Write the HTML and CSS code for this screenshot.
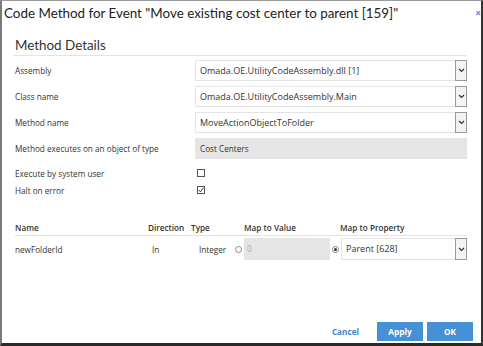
FILE: index.html
```html
<!DOCTYPE html>
<html lang="en">
<head>
  <meta charset="UTF-8">
  <title>Code Method</title>
  <link rel="stylesheet" href="styles.css">
</head>
<body>
  <div class="dialog">
    <div class="dlg-head">
      <span class="dlg-title">Code Method for Event "Move existing cost center to parent [159]"</span>
      <span class="dlg-close">&#215;</span>
    </div>

    <div class="dlg-body">
      <div class="section-title">Method Details</div>

      <div class="form">
        <label class="lbl">Assembly</label>
        <div class="select"><span class="val">Omada.OE.UtilityCodeAssembly.dll [1]</span><span class="arrow"><svg width="7" height="5" viewBox="0 0 7 5"><path d="M1 1 L3.5 3.5 L6 1" fill="none" stroke="#333" stroke-width="1.2"/></svg></span></div>

        <label class="lbl">Class name</label>
        <div class="select"><span class="val">Omada.OE.UtilityCodeAssembly.Main</span><span class="arrow"><svg width="7" height="5" viewBox="0 0 7 5"><path d="M1 1 L3.5 3.5 L6 1" fill="none" stroke="#333" stroke-width="1.2"/></svg></span></div>

        <label class="lbl">Method name</label>
        <div class="select"><span class="val">MoveActionObjectToFolder</span><span class="arrow"><svg width="7" height="5" viewBox="0 0 7 5"><path d="M1 1 L3.5 3.5 L6 1" fill="none" stroke="#333" stroke-width="1.2"/></svg></span></div>

        <label class="lbl">Method executes on an object of type</label>
        <div class="readonly">Cost Centers</div>

        <label class="lbl first-check">Execute by system user</label>
        <div class="check-cell first-check"><span class="check"></span></div>

        <label class="lbl">Halt on error</label>
        <div class="check-cell"><span class="check"><svg width="6" height="6" viewBox="0 0 6 6"><path d="M0.6 3 L2.4 4.8 L5.6 0.6" fill="none" stroke="#333" stroke-width="1"/></svg></span></div>
      </div>

      <div class="params">
        <div class="prow phead">
          <span class="c-name">Name</span>
          <span class="c-dir">Direction</span>
          <span class="c-type">Type</span>
          <span class="c-val head-val">Map to Value</span>
          <span class="c-prop head-prop">Map to Property</span>
        </div>
        <div class="prow pdata">
          <span class="c-name">newFolderId</span>
          <span class="c-dir dir-in">In</span>
          <span class="c-type type-int">Integer</span>
          <span class="c-val"><span class="radio"></span><span class="val-input">0</span></span>
          <span class="c-prop"><span class="radio on"></span><span class="select prop-select"><span class="val">Parent [628]</span><span class="arrow"><svg width="7" height="5" viewBox="0 0 7 5"><path d="M1 1 L3.5 3.5 L6 1" fill="none" stroke="#333" stroke-width="1.2"/></svg></span></span></span>
        </div>
      </div>
    </div>

    <div class="dlg-foot">
      <a class="btn-link">Cancel</a>
      <button class="btn">Apply</button>
      <button class="btn">OK</button>
    </div>
  </div>
</body>
</html>
```

FILE: styles.css
```css
html, body {
  margin: 0;
  padding: 0;
  background: #fff;
}

body {
  font-family: "Open Sans", "Liberation Sans", sans-serif;
  color: #333;
}

.dialog {
  width: 483px;
  height: 346px;
  box-sizing: border-box;
  border-top: 1px solid #9a9a9a;
  border-left: 2px solid #7a7a7a;
  border-right: 2px solid #333;
  border-bottom: 3px solid #2a2a2a;
  display: flex;
  flex-direction: column;
}

.dlg-head {
  display: flex;
  justify-content: space-between;
  align-items: center;
  padding: 2px 0 0 2px;
  height: 20px;
}

.dlg-title {
  font-family: Lato, "Open Sans", sans-serif;
  font-size: 13.4px;
  font-weight: 400;
  color: #222;
}

.dlg-close {
  color: #4a90d9;
  font-size: 10px;
  font-weight: 700;
  line-height: 1;
}

.dlg-body {
  padding: 0 14px 0 11px;
  flex: 1;
}

.section-title {
  font-family: Lato, "Open Sans", sans-serif;
  font-size: 13.4px;
  font-weight: 400;
  color: #333;
  margin-top: 14px;
  padding: 0 0 2px 2px;
  border-bottom: 1px solid #e3e3e3;
  line-height: 16px;
}

.form {
  display: grid;
  grid-template-columns: 182px 1fr;
  row-gap: 5px;
  margin-top: 4px;
  align-items: center;
}

.lbl {
  font-size: 8.2px;
  padding-left: 2px;
  color: #333;
}

.first-check {
  margin-top: 3px;
}

.select {
  display: flex;
  align-items: stretch;
  height: 21px;
  box-sizing: border-box;
  border: 1px solid #e4e4e4;
  background: #fff;
  font-size: 9px;
}

.select .val {
  flex: 1;
  padding-left: 4px;
  line-height: 19px;
  white-space: nowrap;
  overflow: hidden;
}

.select .arrow {
  width: 10px;
  display: flex;
  align-items: center;
  justify-content: center;
  border: 1px solid #9a9a9a;
  background: #f3f3f3;
  margin: -1px -1px -1px 0;
}

.readonly {
  height: 21px;
  line-height: 21px;
  background: #e5e5e5;
  font-size: 8.2px;
  padding-left: 5px;
}

.check-cell {
  height: 12px;
  display: flex;
  align-items: center;
  padding-left: 2px;
}

.check {
  width: 6px;
  height: 6px;
  border: 1px solid #555;
  display: flex;
  align-items: center;
  justify-content: center;
}

.params {
  margin-top: 26px;
  font-size: 8.2px;
}

.prow {
  display: flex;
  align-items: center;
  margin-left: 2px;
}

.phead {
  font-weight: 600;
  line-height: 11px;
  padding-bottom: 2px;
  border-bottom: 1px solid #e3e3e3;
}

.pdata {
  padding-top: 2px;
}

.c-name { width: 133px; }
.c-dir { width: 43px; }
.c-type { width: 44px; }
.c-val { width: 97px; display: flex; align-items: center; }
.c-prop { flex: 1; display: flex; align-items: center; }

.head-val { padding-left: 9px; width: 88px; }
.head-prop { padding-left: 8px; }

.dir-in { padding-left: 4px; width: 39px; }
.type-int { padding-left: 8px; width: 36px; }

.radio {
  width: 5px;
  height: 5px;
  border: 1px solid #888;
  border-radius: 50%;
  margin-right: 2px;
  flex-shrink: 0;
  display: flex;
  align-items: center;
  justify-content: center;
}

.radio.on::after {
  content: "";
  width: 3px;
  height: 3px;
  border-radius: 50%;
  background: #333;
}

.c-val .val-input {
  width: 86px;
  height: 22px;
  line-height: 22px;
  background: #e5e5e5;
  color: #aaa;
  padding-left: 3px;
  box-sizing: border-box;
}

.prop-select {
  flex: 1;
  height: 22px;
}

.prop-select .val {
  line-height: 20px;
}

.dlg-foot {
  display: flex;
  justify-content: flex-end;
  align-items: center;
  gap: 4px;
  padding: 0 8px 2px 0;
}

.btn-link {
  color: #3a86cc;
  font-size: 8.2px;
  font-weight: 700;
  margin-right: 14px;
}

.btn {
  width: 46px;
  height: 19px;
  border: none;
  background: #4690d6;
  color: #fff;
  font-family: "Open Sans", sans-serif;
  font-size: 8.3px;
  font-weight: 700;
  padding: 0;
}
```
